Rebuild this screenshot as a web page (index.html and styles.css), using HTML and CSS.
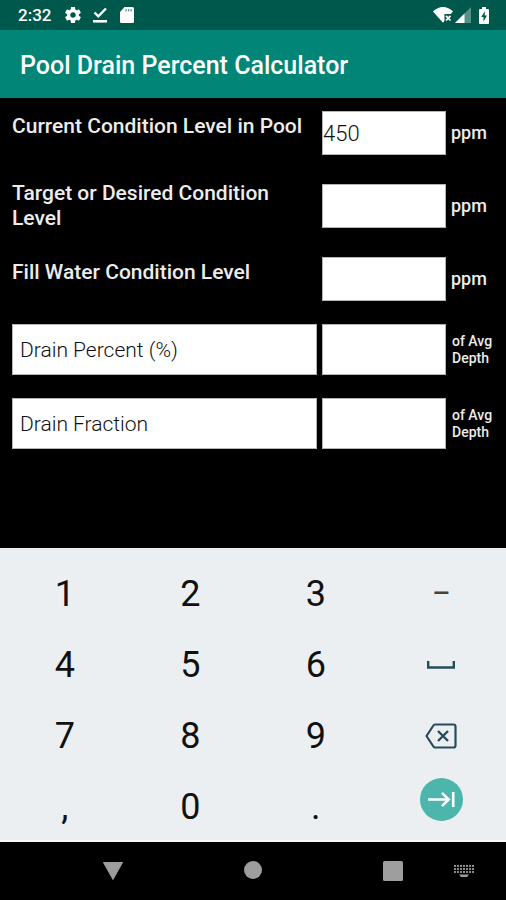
FILE: index.html
```
<!doctype html>
<html lang="en">
<head>
	<meta charset="utf-8" />
	<meta name="viewport" content="width=device-width, initial-scale=1" />
	<title>Pool Drain Percent Calculator</title>
	<link rel="stylesheet" href="styles.css">
</head>
<body>
	<div class="status-bar">
		<span class="clock">2:32</span>
		<svg class="gear" width="16" height="16" viewBox="2 2 20 20"><path fill="#fff" d="M19.43 12.98c.04-.32.07-.64.07-.98s-.03-.66-.07-.98l2.11-1.65c.19-.15.24-.42.12-.64l-2-3.46c-.12-.22-.39-.3-.61-.22l-2.49 1c-.52-.4-1.08-.73-1.69-.98l-.38-2.65C14.46 2.18 14.25 2 14 2h-4c-.25 0-.46.18-.49.42l-.38 2.65c-.61.25-1.17.59-1.69.98l-2.49-1c-.23-.09-.49 0-.61.22l-2 3.46c-.13.22-.07.49.12.64l2.11 1.65c-.04.32-.07.65-.07.98s.03.66.07.98l-2.11 1.65c-.19.15-.24.42-.12.64l2 3.46c.12.22.39.3.61.22l2.49-1c.52.4 1.08.73 1.69.98l.38 2.65c.03.24.24.42.49.42h4c.25 0 .46-.18.49-.42l.38-2.65c.61-.25 1.17-.59 1.69-.98l2.49 1c.23.09.49 0 .61-.22l2-3.46c.12-.22.07-.49-.12-.64l-2.11-1.65zM12 15.5c-1.93 0-3.5-1.57-3.5-3.5s1.57-3.5 3.5-3.5 3.5 1.57 3.5 3.5-1.57 3.5-3.5 3.5z"/></svg>
		<svg class="done" width="14" height="16" viewBox="0 0 14 16"><path fill="none" stroke="#fff" stroke-width="2.4" d="M1.5 5.5l3.8 3.8L13 1.5"/><path fill="#fff" d="M0 13h14v2.6H0z"/></svg>
		<svg class="card" width="14" height="16" viewBox="0 0 14 16"><path fill="#fff" d="M4.5 0H12.5q1.5 0 1.5 1.5v13q0 1.5-1.5 1.500h-11Q0 16 0 14.500V5z"/><path fill="#00574b" opacity=".6" d="M5.500 2h1.300v2.500H5.500zM8 2h1.300v2.500H8zM10.500 2h1.300v2.500h-1.300z"/></svg>
		<span class="spacer"></span>
		<svg class="wifi" width="20" height="16" viewBox="0 0 20 16"><path fill="#fff" d="M0 4.500Q4.500 0 10 0t10 4.500L17.800 7h-6.300v6.800L10 15.800z"/><path fill="none" stroke="#fff" stroke-width="1.800" d="M13 8.800l4.500 4.700M17.500 8.800L13 13.500"/></svg>
		<svg class="signal" width="16" height="16" viewBox="0 0 16 16"><path fill="#fff" opacity=".35" d="M0 16L16 0v16z"/><path fill="#fff" d="M0 16L9.500 6.500V16z"/></svg>
		<svg class="battery" width="10" height="17" viewBox="0 0 10 17"><path fill="#fff" d="M3 0h4v2h2q1 0 1 1v13q0 1-1 1H1q-1 0-1-1V3q0-1 1-1h2z"/><path fill="#00574b" d="M6 4L2.200 10H4.500v4.500L8 8.500H5.600z"/></svg>
	</div>
	<header class="app-bar">
		<h1>Pool Drain Percent Calculator</h1>
	</header>

	<form class="calculator">
		<div class="group">
			<div class="row">
				<label class="caption" for="current">Current Condition Level in Pool</label>
				<input type="text" id="current" name="current" value="450" />
				<span class="unit">ppm</span>
			</div>
			<div class="row">
				<label class="caption" for="target">Target or Desired Condition Level</label>
				<input type="text" id="target" name="target" />
				<span class="unit">ppm</span>
			</div>
			<div class="row">
				<label class="caption" for="fill">Fill Water Condition Level</label>
				<input type="text" id="fill" name="fill" />
				<span class="unit">ppm</span>
			</div>
		</div>
		<div class="group results">
			<div class="row">
				<label class="box" for="percent">Drain Percent (%)</label>
				<input type="text" id="percent" name="percent" readonly />
				<span class="unit small">of Avg Depth</span>
			</div>
			<div class="row">
				<label class="box" for="fraction">Drain Fraction</label>
				<input type="text" id="fraction" name="fraction" readonly />
				<span class="unit small">of Avg Depth</span>
			</div>
		</div>
	</form>

	<div class="keypad">
		<button type="button">1</button>
		<button type="button">2</button>
		<button type="button">3</button>
		<button type="button" class="dash">–</button>
		<button type="button">4</button>
		<button type="button">5</button>
		<button type="button">6</button>
		<button type="button" aria-label="Space">
			<svg width="28" height="8" viewBox="0 0 28 8"><path fill="none" stroke="#264c59" stroke-width="2.400" d="M1.200 0v6.500h25.600V0"/></svg>
		</button>
		<button type="button">7</button>
		<button type="button">8</button>
		<button type="button">9</button>
		<button type="button" aria-label="Delete">
			<svg width="32" height="26" viewBox="0 0 32 26"><path fill="none" stroke="#264c59" stroke-width="2.200" stroke-linejoin="round" d="M10 1.500h18.500q2 0 2 2v19q0 2-2 2H10q-1 0-1.600-1L1.500 13 8.400 2.500q.6-1 1.600-1z"/><path fill="none" stroke="#264c59" stroke-width="2.400" d="M13 8l10 10M23 8L13 18"/></svg>
		</button>
		<button type="button">,</button>
		<button type="button">0</button>
		<button type="button">.</button>
		<button type="button" class="next" aria-label="Next">
			<svg width="43" height="43" viewBox="0 0 43 43"><circle cx="21.500" cy="21.500" r="21.500" fill="#4db6ac"/><path fill="none" stroke="#fff" stroke-width="2.600" d="M8 21.500h20.500M22 14.800l6.700 6.700-6.700 6.700M33.200 14v15"/></svg>
		</button>
	</div>

	<nav class="nav-bar">
		<div class="nav-keys">
			<button type="button" aria-label="Back"><svg width="22" height="20" viewBox="0 0 22 20"><path fill="#9e9e9e" stroke="#9e9e9e" stroke-linejoin="round" d="M1.500 1.500h19L11 18.500z"/></svg></button>
			<button type="button" aria-label="Home"><svg width="18" height="18" viewBox="0 0 18 18"><circle cx="9" cy="9" r="9" fill="#9e9e9e"/></svg></button>
			<button type="button" aria-label="Recent apps"><svg width="20" height="20" viewBox="0 0 20 20"><rect width="20" height="20" rx="1.500" fill="#9e9e9e"/></svg></button>
		</div>
		<button type="button" aria-label="Keyboard"><svg width="20" height="12" viewBox="0 0 20 12"><path fill="none" stroke="#8a8a8a" stroke-width="2" stroke-dasharray="2 1" d="M0 1h20M0 4h20M0 7h20"/><path fill="#9e9e9e" d="M5 9.500h10L13 12H7z"/></svg></button>
	</nav>
</body>
</html>
```
FILE: styles.css
```
* { box-sizing: border-box; }
body {
	margin: 0;
	min-height: 100vh;
	display: flex;
	flex-direction: column;
	background: #000;
	color: #ececec;
	font-family: Roboto, sans-serif;
}
svg { display: block; }
button { margin: 0; padding: 0; border: 0; background: none; font-family: inherit; cursor: pointer; }

/* status bar */
.status-bar {
	display: flex;
	align-items: center;
	height: 30px;
	padding: 0 17px 0 18px;
	background: #00574b;
	color: #fff;
}
.clock { font-size: 17px; font-weight: 500; line-height: 30px; }
.gear { margin-left: 14px; }
.done { margin-left: 12px; }
.card { margin-left: 13px; }
.spacer { flex: 1; }
.signal { margin-left: 2px; }
.battery { margin-left: 8px; }

.app-bar { background: #008577; padding: 22px 20px 18px; }
.app-bar h1 { margin: 0; font-size: 25px; line-height: 28px; font-weight: 500; color: #fff; }

/* form */
.calculator { flex: 1; padding: 10px 0 24px 12px; }
.group { display: grid; gap: 23px; }
.results { margin-top: 20px; }
.row {
	display: grid;
	grid-template-columns: 1fr 124px 55px;
	column-gap: 5px;
	align-items: center;
	min-height: 50px;
}
.caption { min-height: 38px; font-size: 21px; line-height: 25px; font-weight: 500; }
.row input {
	width: 100%;
	height: 44px;
	padding: 0;
	border: 1px solid #b5b5b5;
	border-radius: 0;
	background: #fff;
	color: #111;
	font-family: inherit;
	font-size: 22px;
	font-weight: 300;
}
.row input:focus { outline: none; }
.unit { font-size: 18px; line-height: 24px; font-weight: 500; }
.small { font-size: 14px; line-height: 17px; padding: 0 8px 0 1px; }
.box {
	height: 51px;
	padding: 0 7px;
	border: 1px solid #b5b5b5;
	background: #fff;
	color: #111;
	font-size: 21px;
	line-height: 51px;
	font-weight: 300;
}
.results .row input { height: 51px; }

/* on-screen keypad */
.keypad {
	display: grid;
	grid-template-columns: repeat(4, 1fr);
	grid-auto-rows: 71px;
	padding: 10px 2px 0;
	background: #eceff1;
	box-shadow: inset 0 -2px #f8f8f8;
}
.keypad button {
	display: flex;
	align-items: center;
	justify-content: center;
	color: #111;
	font-size: 36px;
	line-height: 40px;
}
.keypad .dash { font-size: 28px; font-weight: 500; color: #444; }
.keypad .next { padding-bottom: 14px; }

/* system navigation */
.nav-bar {
	display: flex;
	align-items: center;
	justify-content: flex-end;
	gap: 31px;
	height: 58px;
	padding-right: 32px;
}
.nav-keys { display: flex; gap: 80px; }
.nav-keys button { width: 60px; display: flex; justify-content: center; }
```
